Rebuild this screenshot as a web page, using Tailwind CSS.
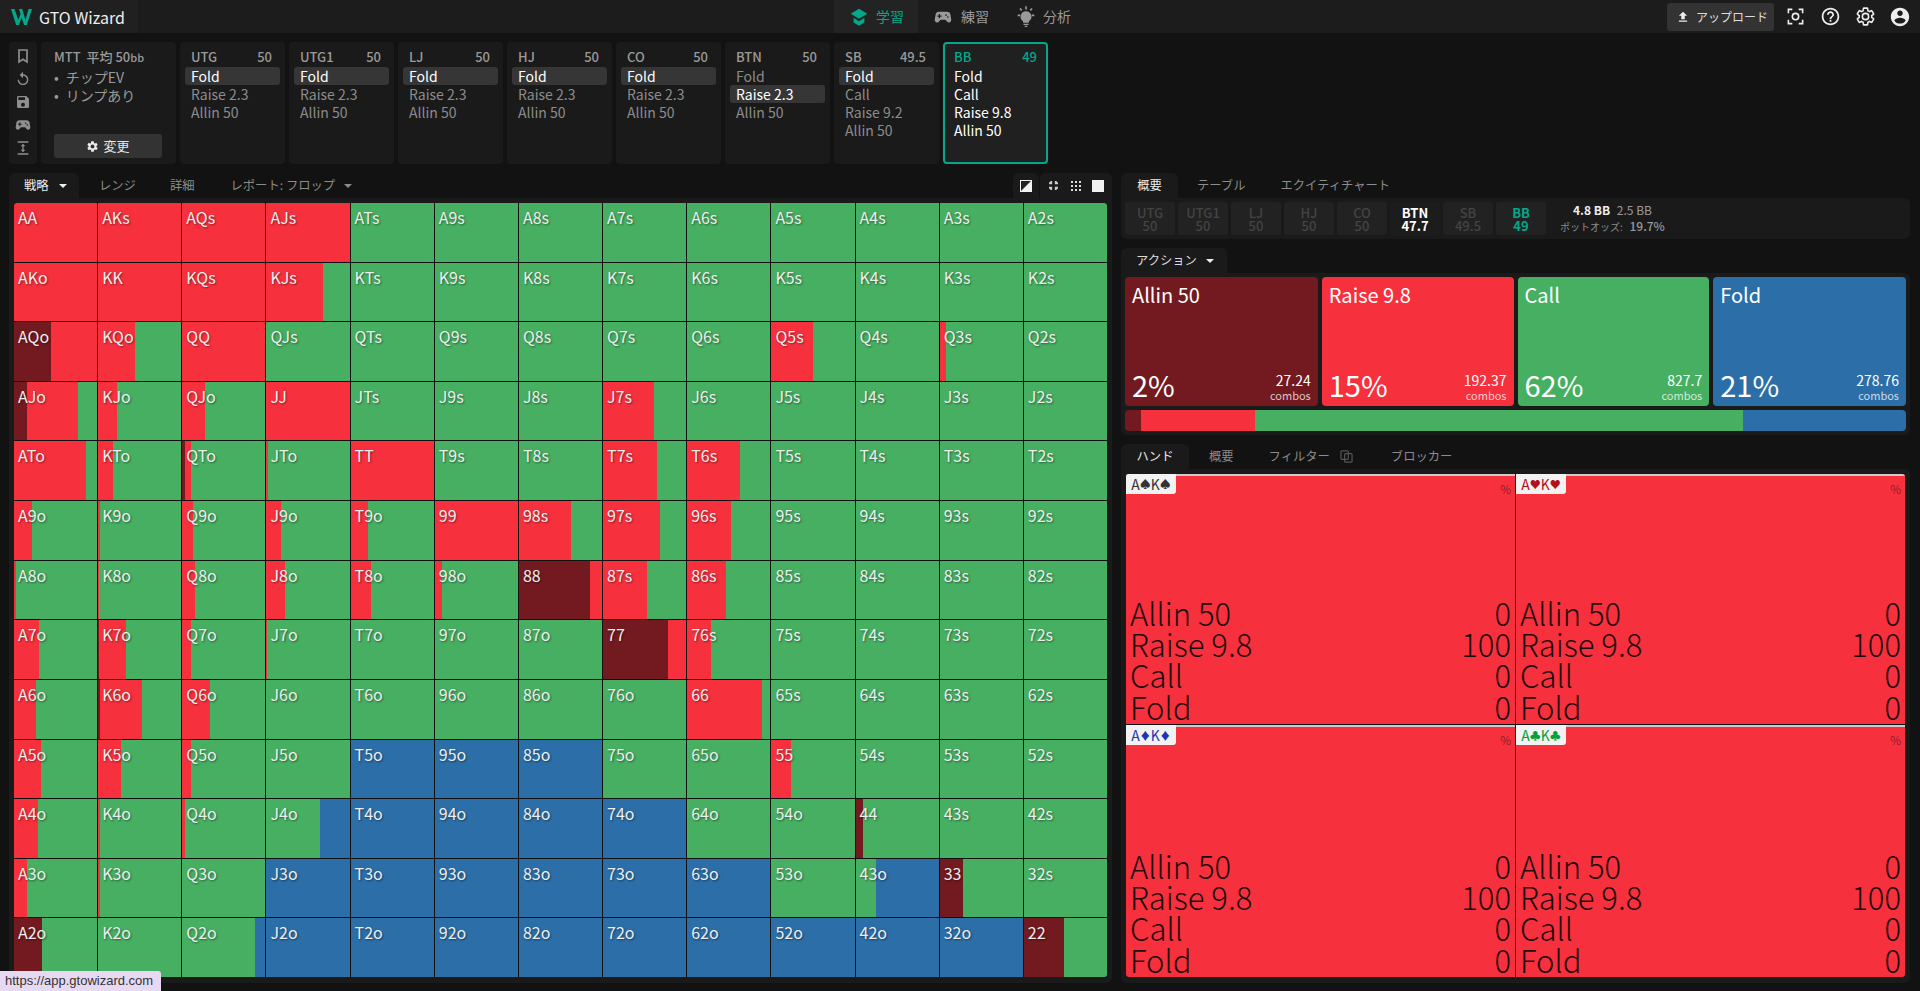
<!DOCTYPE html>
<html lang="ja">
<head>
    <meta charset="UTF-8">
    <title>GTO Wizard</title>
    <script src="https://cdn.jsdelivr.net/npm/@tailwindcss/browser@4"></script>
</head>
<body class="bg-[#121212] text-white font-['Noto_Sans_CJK_JP',sans-serif] w-[1920px] h-[991px] overflow-hidden relative">

    <!-- barra superior -->
    <header class="h-[33px] bg-[#1c1c1c] flex items-stretch relative">
        <div class="w-[138px] bg-[#202020] flex items-center pl-[11px] gap-[7px]">
            <svg class="w-[21px] h-[16px]" viewBox="0 0 21 16" fill="#04a78a"><path d="M0 0h3.500l3.800 11L9.500 5 8 0h3.200l3.300 11L17.500 0H21l-5.200 16h-2.600L10.500 8.500 8 16H5.200z"/></svg>
            <span class="text-[16px] text-[#eeeeee]">GTO Wizard</span>
        </div>
        <nav class="absolute left-[834px] top-0 h-[33px] flex text-[14px]">
            <div class="w-[84px] bg-[#232323] flex items-center pl-[15px] gap-[7px] text-[#04a78a]">
                <svg class="w-[20px] h-[20px]" viewBox="0 0 24 24" fill="#04a78a"><path d="M12 2 2 8l10 6 10-6zM5.500 13v5.500L12 22.500l6.500-4V13L12 17z"/></svg>
                <span>学習</span>
            </div>
            <div class="w-[84px] flex items-center pl-[15px] gap-[8px] text-[#9a9a9a]">
                <svg class="w-[20px] h-[18px]" viewBox="0 0 24 24" fill="#9a9a9a"><path d="M7 5h10a5 5 0 0 1 5 4.200l1 6.300a3.200 3.200 0 0 1-5.600 2.500L15 15.500H9L6.600 18A3.200 3.200 0 0 1 1 15.500l1-6.300A5 5 0 0 1 7 5z"/><path fill="#1c1c1c" d="M6.500 8h1.500v2h2v1.500H8v2H6.500v-2h-2V10h2z"/><circle fill="#1c1c1c" cx="16" cy="9.500" r="1.100"/><circle fill="#1c1c1c" cx="18.500" cy="12" r="1.100"/></svg>
                <span>練習</span>
            </div>
            <div class="flex items-center pl-[14px] gap-[7px] text-[#9a9a9a]">
                <svg class="w-[20px] h-[22px]" viewBox="0 0 24 26" fill="#9a9a9a"><path d="M12 6a6.500 6.500 0 0 0-3.500 12v2h7v-2A6.500 6.500 0 0 0 12 6zM9 21h6v1.500H9zM10.500 23.500h3V25h-3zM11 0h2v4h-2zM2 10h3v2H2zM19 10h3v2h-3zM4 3.500 5.400 2.100l2.200 2.200-1.400 1.400zM18.600 2.100 20 3.500l-2.200 2.200-1.400-1.400z"/></svg>
                <span>分析</span>
            </div>
        </nav>
        <div class="ml-auto flex items-center pr-[9px]">
            <button class="w-[107px] h-[28px] bg-[#333333] rounded-[3px] flex items-center pl-[9px] gap-[6px] text-[12px] text-[#dddddd]">
                <svg class="w-[14px] h-[14px]" viewBox="0 0 24 24" fill="#eeeeee"><path d="M9 16h6v-6h4l-7-7-7 7h4zM5 18h14v2H5z"/></svg>
                <span>アップロード</span>
            </button>
            <svg class="w-[19px] h-[19px] ml-[12px]" viewBox="0 0 24 24" fill="none" stroke="#eeeeee" stroke-width="2"><path d="M8 3H3v5M16 3h5v5M8 21H3v-5M16 21h5v-5"/><circle cx="12" cy="12" r="4"/></svg>
            <svg class="w-[21px] h-[21px] ml-[15px]" viewBox="0 0 24 24" fill="#eeeeee"><path d="M11 18h2v-2h-2v2zm1-16C6.480 2 2 6.480 2 12s4.480 10 10 10 10-4.480 10-10S17.520 2 12 2zm0 18c-4.410 0-8-3.590-8-8s3.590-8 8-8 8 3.590 8 8-3.590 8-8 8zm0-14c-2.210 0-4 1.790-4 4h2c0-1.100.9-2 2-2s2 .9 2 2c0 2-3 1.750-3 5h2c0-2.250 3-2.500 3-5 0-2.210-1.790-4-4-4z"/></svg>
            <svg class="w-[21px] h-[21px] ml-[14px]" viewBox="0 0 24 24" fill="none" stroke="#eeeeee" stroke-width="1.800"><path d="M19.140 12.940c.04-.3.06-.61.06-.94 0-.32-.02-.64-.07-.94l2.030-1.580c.18-.14.23-.41.12-.61l-1.920-3.320c-.12-.22-.37-.29-.59-.22l-2.390.96c-.5-.38-1.030-.7-1.620-.94l-.36-2.540c-.04-.24-.24-.41-.48-.41h-3.840c-.24 0-.43.17-.47.41l-.36 2.540c-.59.24-1.130.57-1.620.94l-2.390-.96c-.22-.08-.47 0-.59.22L2.740 8.870c-.12.21-.08.47.12.61l2.030 1.580c-.05.3-.09.63-.09.94s.02.64.07.94l-2.030 1.580c-.18.14-.23.41-.12.61l1.920 3.320c.12.22.37.29.59.22l2.390-.96c.5.38 1.030.7 1.620.94l.36 2.540c.05.24.24.41.48.41h3.840c.24 0 .44-.17.47-.41l.36-2.540c.59-.24 1.130-.56 1.620-.94l2.390.96c.22.08.47 0 .59-.22l1.920-3.320c.12-.22.07-.47-.12-.61l-2.010-1.580zM12 15.600c-1.980 0-3.600-1.620-3.600-3.600s1.620-3.600 3.600-3.600 3.600 1.620 3.600 3.600-1.620 3.600-3.600 3.600z"/></svg>
            <svg class="w-[22px] h-[22px] ml-[13px]" viewBox="0 0 24 24" fill="#eeeeee"><path d="M12 2C6.480 2 2 6.480 2 12s4.480 10 10 10 10-4.480 10-10S17.520 2 12 2zm0 3c1.660 0 3 1.340 3 3s-1.340 3-3 3-3-1.340-3-3 1.340-3 3-3zm0 14.200c-2.500 0-4.710-1.280-6-3.220.03-1.990 4-3.080 6-3.080 1.990 0 5.970 1.090 6 3.080-1.290 1.940-3.500 3.220-6 3.220z"/></svg>
        </div>
    </header>

    <!-- posiciones -->
    <section class="flex gap-[4px] pl-[9px] mt-[9px] h-[122px]">
        <div class="w-[28px] bg-[#1a1a1a] rounded-[4px] flex flex-col items-center pt-[6px] gap-[7px]">
            <svg class="w-[16px] h-[16px]" viewBox="0 0 24 24" fill="none" stroke="#8f8f8f" stroke-width="2.500"><path d="M6 3h12v18l-6-4-6 4z"/></svg>
            <svg class="w-[16px] h-[16px]" viewBox="0 0 24 24" fill="#8f8f8f"><path d="M12 5V1L7 6l5 5V7c3.310 0 6 2.690 6 6s-2.690 6-6 6-6-2.690-6-6H4c0 4.420 3.580 8 8 8s8-3.580 8-8-3.580-8-8-8z"/></svg>
            <svg class="w-[16px] h-[16px]" viewBox="0 0 24 24" fill="#8f8f8f"><path d="M17 3H5a2 2 0 0 0-2 2v14a2 2 0 0 0 2 2h14a2 2 0 0 0 2-2V7l-4-4zm-5 16a3 3 0 1 1 0-6 3 3 0 0 1 0 6zm3-10H5V5h10v4z"/></svg>
            <svg class="w-[16px] h-[16px]" viewBox="0 0 24 24" fill="#8f8f8f"><path d="M7 5h10a5 5 0 0 1 5 4.200l1 6.300a3.200 3.200 0 0 1-5.600 2.500L15 15.500H9L6.600 18A3.200 3.200 0 0 1 1 15.500l1-6.300A5 5 0 0 1 7 5z"/><path fill="#1a1a1a" d="M6.500 8h1.500v2h2v1.500H8v2H6.500v-2h-2V10h2z"/><circle fill="#1a1a1a" cx="16" cy="9.500" r="1.100"/><circle fill="#1a1a1a" cx="18.500" cy="12" r="1.100"/></svg>
            <svg class="w-[16px] h-[16px]" viewBox="0 0 24 24" fill="#8f8f8f"><path d="M4 2h16v2H4zM4 20h16v2H4zM12 5.500l3.500 4H13v5h2.500L12 18.500l-3.500-4H11v-5H8.500z"/></svg>
        </div>

        <div class="w-[135px] bg-[#1a1a1a] rounded-[4px] pl-[13px] pr-[14px] pt-[6px] flex flex-col text-[#9a9a9a]">
            <div class="text-[13px] leading-[18px] font-medium">MTT&nbsp; 平均 50<span class="text-[11px]">bb</span></div>
            <div class="mt-[2px] text-[14px] leading-[18px] flex gap-[7px]"><span>•</span><span>チップEV</span></div>
            <div class="text-[14px] leading-[18px] flex gap-[7px]"><span>•</span><span>リンプあり</span></div>
            <button class="mt-auto mb-[6px] h-[24px] bg-[#333333] rounded-[3px] flex items-center justify-center gap-[4px] text-[13px] text-[#e5e5e5]">
                <svg class="w-[13px] h-[13px]" viewBox="0 0 24 24" fill="#eeeeee"><path d="M19.140 12.940c.04-.3.06-.61.06-.94 0-.32-.02-.64-.07-.94l2.030-1.580c.18-.14.23-.41.12-.61l-1.920-3.320c-.12-.22-.37-.29-.59-.22l-2.390.96c-.5-.38-1.030-.7-1.620-.94l-.36-2.540c-.04-.24-.24-.41-.48-.41h-3.840c-.24 0-.43.17-.47.41l-.36 2.540c-.59.24-1.130.57-1.620.94l-2.390-.96c-.22-.08-.47 0-.59.22L2.740 8.870c-.12.21-.08.47.12.61l2.030 1.580c-.05.3-.09.63-.09.94s.02.64.07.94l-2.030 1.580c-.18.14-.23.41-.12.61l1.920 3.320c.12.22.37.29.59.22l2.390-.96c.5.38 1.030.7 1.620.94l.36 2.540c.05.24.24.41.48.41h3.840c.24 0 .44-.17.47-.41l.36-2.540c.59-.24 1.130-.56 1.620-.94l2.390.96c.22.08.47 0 .59-.22l1.920-3.320c.12-.22.07-.47-.12-.61l-2.010-1.580zM12 15.600c-1.980 0-3.600-1.620-3.600-3.600s1.620-3.600 3.600-3.600 3.600 1.620 3.600 3.600-1.620 3.600-3.600 3.600z"/></svg>
                <span>変更</span>
            </button>
        </div>

        <div id="positions" class="flex gap-[4px]"></div>
    </section>

    <!-- contenido -->
    <main class="flex pl-[9px] mt-[9px] gap-[9px]">

        <!-- matriz -->
        <section class="w-[1103px]">
            <div class="h-[25px] flex items-center text-[12.3px] text-[#8c8c8c]">
                <div class="w-[70px] h-[25px] bg-[#1a1a1a] rounded-t-[6px] flex items-center pl-[15px] text-[#eeeeee]">戦略<span class="ml-[10px] w-0 h-0 border-x-[4px] border-x-transparent border-t-[4px] border-t-[#eeeeee]"></span></div>
                <span class="ml-[20px]">レンジ</span>
                <span class="ml-[34px]">詳細</span>
                <span class="ml-[36px]">レポート: フロップ</span>
                <span class="ml-[9px] w-0 h-0 border-x-[4px] border-x-transparent border-t-[4px] border-t-[#8c8c8c]"></span>
                <div class="ml-auto flex h-[25px] gap-[1px]">
                    <div class="w-[26px] bg-[#1a1a1a] rounded-t-[6px] flex items-center justify-center">
                        <svg class="w-[12px] h-[12px]" viewBox="0 0 12 12"><rect x="0.500" y="0.500" width="11" height="11" fill="#222222" stroke="#f2f2f2"/><path d="M12 0v12H0z" fill="#f2f2f2"/></svg>
                    </div>
                    <div class="w-[72px] bg-[#1a1a1a] rounded-t-[6px] flex items-center pl-[9px] gap-[13px]">
                        <svg class="w-[9px] h-[9px]" viewBox="0 0 10 10" fill="#cccccc"><path d="M0 3.500h3.500V0H2L0 2zM6.500 0v3.500H10V2L8 0zM0 6.500h3.500V10H2L0 8zM6.500 10V6.500H10V8l-2 2z"/></svg>
                        <svg class="w-[10px] h-[10px]" viewBox="0 0 10 10" fill="#dddddd"><path d="M0 0h2v2H0zM4 0h2v2H4zM8 0h2v2H8zM0 4h2v2H0zM4 4h2v2H4zM8 4h2v2H8zM0 8h2v2H0zM4 8h2v2H4zM8 8h2v2H8z"/></svg>
                        <svg class="w-[12px] h-[12px] -ml-[2px]" viewBox="0 0 12 12"><rect width="12" height="12" fill="#f2f2f2"/></svg>
                    </div>
                </div>
            </div>
            <div class="bg-[#1a1a1a] rounded-b-[6px] pl-[5px] pr-[5px] pt-[5px] pb-[6px]">
                <div id="matrix" class="grid grid-cols-13 grid-rows-13 gap-px h-[774px] bg-[#111111] rounded-[3px] overflow-hidden"></div>
            </div>
        </section>

        <!-- panel derecho -->
        <section class="w-[789px]">
            <div class="h-[25px] flex items-center text-[12.3px] text-[#8c8c8c]">
                <div class="w-[57px] h-[25px] bg-[#1a1a1a] rounded-t-[6px] flex items-center justify-center text-[#eeeeee]">概要</div>
                <span class="ml-[19px]">テーブル</span>
                <span class="ml-[35px]">エクイティチャート</span>
            </div>
            <div class="h-[41px] bg-[#1a1a1a] rounded-[6px] rounded-tl-none flex items-center pl-[4px] gap-[3px]" id="stacks"></div>

            <div class="mt-[9px] w-[106px] h-[25px] bg-[#1a1a1a] rounded-t-[6px] flex items-center pl-[15px] text-[12.3px] text-[#dddddd]">アクション<span class="ml-[9px] w-0 h-0 border-x-[4px] border-x-transparent border-t-[4px] border-t-[#eeeeee]"></span></div>
            <div class="h-[162px] bg-[#1a1a1a] rounded-[6px] rounded-tl-none px-[4px] pt-[4px]">
                <div class="flex gap-[4px] h-[129px]">
                    <div class="w-[193px] bg-[#731a20] rounded-[4px] px-[7px] pt-[4px] flex flex-col">
                        <div class="text-[20px] leading-[28px]">Allin 50</div>
                        <div class="mt-auto mb-[4px] flex justify-between items-end">
                            <span class="text-[29px] leading-[36px]">2%</span>
                            <span class="text-right"><span class="block text-[14px] leading-[17px]">27.24</span><span class="block text-[11px] leading-[13px] text-white/75">combos</span></span>
                        </div>
                    </div>
                    <div class="w-[192px] bg-[#f7303e] rounded-[4px] px-[7px] pt-[4px] flex flex-col">
                        <div class="text-[20px] leading-[28px]">Raise 9.8</div>
                        <div class="mt-auto mb-[4px] flex justify-between items-end">
                            <span class="text-[29px] leading-[36px]">15%</span>
                            <span class="text-right"><span class="block text-[14px] leading-[17px]">192.37</span><span class="block text-[11px] leading-[13px] text-white/75">combos</span></span>
                        </div>
                    </div>
                    <div class="w-[192px] bg-[#46af62] rounded-[4px] px-[7px] pt-[4px] flex flex-col">
                        <div class="text-[20px] leading-[28px]">Call</div>
                        <div class="mt-auto mb-[4px] flex justify-between items-end">
                            <span class="text-[29px] leading-[36px]">62%</span>
                            <span class="text-right"><span class="block text-[14px] leading-[17px]">827.7</span><span class="block text-[11px] leading-[13px] text-white/75">combos</span></span>
                        </div>
                    </div>
                    <div class="w-[193px] bg-[#2b6ea8] rounded-[4px] px-[7px] pt-[4px] flex flex-col">
                        <div class="text-[20px] leading-[28px]">Fold</div>
                        <div class="mt-auto mb-[4px] flex justify-between items-end">
                            <span class="text-[29px] leading-[36px]">21%</span>
                            <span class="text-right"><span class="block text-[14px] leading-[17px]">278.76</span><span class="block text-[11px] leading-[13px] text-white/75">combos</span></span>
                        </div>
                    </div>
                </div>
                <div class="flex h-[21px] mt-[4px] rounded-[4px] overflow-hidden">
                    <div class="w-[16px] bg-[#731a20]"></div>
                    <div class="w-[114px] bg-[#f7303e]"></div>
                    <div class="w-[488px] bg-[#46af62]"></div>
                    <div class="flex-1 bg-[#2b6ea8]"></div>
                </div>
            </div>

            <div class="mt-[9px] h-[25px] flex items-center text-[12.3px] text-[#8c8c8c]">
                <div class="w-[68px] h-[25px] bg-[#1a1a1a] rounded-t-[6px] flex items-center justify-center text-[#eeeeee]">ハンド</div>
                <span class="ml-[20px]">概要</span>
                <span class="ml-[35px]">フィルター</span>
                <svg class="ml-[10px] w-[13px] h-[13px]" viewBox="0 0 14 14" fill="none" stroke="#555555" stroke-width="1.300"><rect x="1" y="1" width="8" height="9" rx="1"/><rect x="5" y="4" width="8" height="9" rx="1"/></svg>
                <span class="ml-[38px]">ブロッカー</span>
            </div>
            <div class="h-[514px] bg-[#1a1a1a] rounded-[6px] rounded-tl-none p-[5px]">
                <div id="hands" class="grid grid-cols-2 grid-rows-[250px_252px] gap-px bg-[#111111] h-[503px] rounded-[3px] overflow-hidden"></div>
            </div>
        </section>
    </main>

    <!-- url del enlace -->
    <div class="absolute left-0 bottom-0 w-[161px] h-[20px] bg-[#e8d9f3] rounded-tr-[3px] flex items-center pl-[5px] font-['Liberation_Sans',sans-serif] text-[13px] text-[#333333]">https://app.gtowizard.com</div>

    <script>
        const positions = [
            { name: 'UTG', stack: '50', rows: ['Fold', 'Raise 2.3', 'Allin 50'], selected: 0 },
            { name: 'UTG1', stack: '50', rows: ['Fold', 'Raise 2.3', 'Allin 50'], selected: 0 },
            { name: 'LJ', stack: '50', rows: ['Fold', 'Raise 2.3', 'Allin 50'], selected: 0 },
            { name: 'HJ', stack: '50', rows: ['Fold', 'Raise 2.3', 'Allin 50'], selected: 0 },
            { name: 'CO', stack: '50', rows: ['Fold', 'Raise 2.3', 'Allin 50'], selected: 0 },
            { name: 'BTN', stack: '50', rows: ['Fold', 'Raise 2.3', 'Allin 50'], selected: 1 },
            { name: 'SB', stack: '49.5', rows: ['Fold', 'Call', 'Raise 9.2', 'Allin 50'], selected: 0 },
            { name: 'BB', stack: '49', rows: ['Fold', 'Call', 'Raise 9.8', 'Allin 50'], selected: -1, active: true }
        ];

        const posBox = document.getElementById('positions');
        positions.forEach(p => {
            const card = document.createElement('div');
            card.className = p.active
                ? 'w-[105px] bg-[#202020] border-2 border-[#04a78a] rounded-[4px] px-[9px] pt-[4px]'
                : 'w-[105px] bg-[#1a1a1a] rounded-[4px] px-[5px] pt-[6px]';
            const head = p.active
                ? 'flex justify-between text-[13px] leading-[18px] font-medium text-[#04a78a] mb-[1px]'
                : 'flex justify-between text-[13px] leading-[18px] font-medium text-[#9a9a9a] pl-[6px] pr-[8px] mb-[1px]';
            let html = `<div class="${head}"><span>${p.name}</span><span>${p.stack}</span></div>`;
            p.rows.forEach((r, i) => {
                if (p.active) {
                    html += `<div class="h-[18px] leading-[18px] text-[14px] text-white">${r}</div>`;
                } else if (i === p.selected) {
                    html += `<div class="h-[18px] leading-[18px] text-[14px] text-white bg-[#363636] rounded-[3px] pl-[6px]">${r}</div>`;
                } else {
                    html += `<div class="h-[18px] leading-[18px] text-[14px] text-[#8c8c8c] pl-[6px]">${r}</div>`;
                }
            });
            card.innerHTML = html;
            posBox.appendChild(card);
        });

        const stacks = [['UTG', '50'], ['UTG1', '50'], ['LJ', '50'], ['HJ', '50'], ['CO', '50'], ['BTN', '47.7', 'on'], ['SB', '49.5'], ['BB', '49', 'hero']];
        const stackBox = document.getElementById('stacks');
        stacks.forEach(s => {
            const chip = document.createElement('div');
            let cls = 'w-[50px] h-[33px] rounded-[3px] bg-[#222222] text-[#444444] flex flex-col items-center justify-center text-[13px] leading-[13px] font-medium';
            if (s[2] === 'on') cls = 'w-[50px] h-[33px] rounded-[3px] bg-[#1c1c1c] text-white flex flex-col items-center justify-center text-[13px] leading-[13px] font-bold';
            if (s[2] === 'hero') cls = 'w-[50px] h-[33px] rounded-[3px] bg-[#222222] text-[#04a78a] flex flex-col items-center justify-center text-[13px] leading-[13px] font-bold';
            chip.className = cls;
            chip.innerHTML = `<span>${s[0]}</span><span>${s[1]}</span>`;
            stackBox.appendChild(chip);
        });
        const pot = document.createElement('div');
        pot.className = 'ml-[11px] flex flex-col items-center text-[12px] leading-[16px]';
        pot.innerHTML = `<div class="font-bold text-[#eeeeee]">4.8 BB <span class="ml-[4px] font-normal text-[#9a9a9a]">2.5 BB</span></div>
            <div class="text-[#9a9a9a]"><span class="text-[10px] text-[#8c8c8c]">ポットオッズ:</span> <span class="ml-[4px] font-medium">19.7%</span></div>`;
        stackBox.appendChild(pot);

        // [allin, raise, call] en %, el resto es fold
        const ranks = ['A', 'K', 'Q', 'J', 'T', '9', '8', '7', '6', '5', '4', '3', '2'];
        const mixes = {
            AA: [0, 100, 0], AKs: [0, 100, 0], AQs: [0, 100, 0], AJs: [0, 100, 0],
            AKo: [0, 100, 0], KK: [0, 100, 0], KQs: [0, 100, 0], KJs: [0, 68, 32],
            AQo: [45, 55, 0], KQo: [0, 44, 56], QQ: [0, 100, 0], Q5s: [0, 50, 50], Q3s: [0, 7, 93],
            AJo: [16, 61, 23], KJo: [0, 23, 77], QJo: [0, 27, 73], JJ: [0, 100, 0], J7s: [0, 61, 39],
            ATo: [0, 87, 13], KTo: [0, 18, 82], QTo: [3, 7, 90], JTo: [0, 2, 98], TT: [0, 100, 0], T7s: [0, 65, 35], T6s: [0, 63, 37],
            A9o: [0, 22, 78], K9o: [0, 2, 98], Q9o: [0, 13, 87], J9o: [0, 18, 82], T9o: [0, 21, 79], 99: [0, 100, 0], '98s': [0, 63, 37], '97s': [0, 68, 32], '96s': [0, 53, 47],
            A8o: [0, 2.5, 97.5], K8o: [0, 1.5, 98.5], Q8o: [0, 15, 85], J8o: [0, 22, 78], T8o: [0, 24, 76], '98o': [0, 8.5, 91.5], 88: [86, 14, 0], '87s': [0, 53, 47], '86s': [0, 47, 53],
            A7o: [0, 30, 70], K7o: [1, 32, 67], Q7o: [0, 10, 90], J7o: [0, 1, 99], T7o: [0, 1, 99], 77: [78, 22, 0], '76s': [0, 28, 72],
            A6o: [0, 26, 74], K6o: [2, 51, 47], Q6o: [0, 33, 67], 66: [0, 90, 10],
            A5o: [0, 32, 68], K5o: [0, 27, 73], Q5o: [0, 10, 90], 55: [0, 24, 76],
            A4o: [0, 29, 71], K4o: [0, 2, 98], Q4o: [0, 3, 97], J4o: [0, 0, 64], 44: [9, 0, 91],
            A3o: [0, 16, 84], K3o: [0, 2, 98], '43o': [0, 0, 25], 33: [28, 0, 72],
            A2o: [34, 0, 66], Q2o: [0, 0, 87], 22: [48, 0, 52]
        };
        const foldHands = ['T5o', '95o', '85o', 'T4o', '94o', '84o', '74o', 'J3o', 'T3o', '93o', '83o', '73o', '63o', 'J2o', 'T2o', '92o', '82o', '72o', '62o', '52o', '42o', '32o'];

        const matrix = document.getElementById('matrix');
        ranks.forEach((r1, i) => {
            ranks.forEach((r2, j) => {
                const label = i === j ? r1 + r2 : i < j ? r1 + r2 + 's' : r2 + r1 + 'o';
                const mix = foldHands.includes(label) ? [0, 0, 0] : (mixes[label] || [0, 0, 100]);
                const cell = document.createElement('div');
                cell.className = 'relative flex overflow-hidden bg-[#2b6ea8]';
                cell.innerHTML = `<div class="bg-[#731a20]" style="width:${mix[0]}%"></div><div class="bg-[#f7303e]" style="width:${mix[1]}%"></div><div class="bg-[#46af62]" style="width:${mix[2]}%"></div>
                    <span class="absolute left-[4px] top-[3px] text-[16px] leading-[22px] text-[#eeeeee] [text-shadow:1px_1px_2px_rgba(0,0,0,0.45)]">${label}</span>`;
                matrix.appendChild(cell);
            });
        });

        const hands = [
            ['♠', 'text-[#333333]'],
            ['♥', 'text-[#b30f1e]'],
            ['♦', 'text-[#1c35b5]'],
            ['♣', 'text-[#00a03c]']
        ];
        const handBox = document.getElementById('hands');
        hands.forEach(h => {
            const cell = document.createElement('div');
            cell.className = 'relative bg-[#f7303e] border-t-2 border-[#cccccc] flex flex-col justify-end px-[4px] pb-[2px] text-[#1c0a0c] font-light text-[31px] leading-[31.3px]';
            cell.innerHTML = `<div class="absolute left-0 top-[-2px] w-[50px] h-[20px] bg-[#f2f2f2] rounded-br-[3px] flex items-center justify-center text-[14px] leading-[20px] font-normal ${h[1]}">A<span class="text-[11px]">${h[0]}</span>K<span class="text-[11px]">${h[0]}</span></div>
                <span class="absolute right-[4px] top-[6px] text-[12px] leading-[14px] text-[#6b1a20]">%</span>
                <div class="flex justify-between"><span>Allin 50</span><span>0</span></div>
                <div class="flex justify-between"><span>Raise 9.8</span><span>100</span></div>
                <div class="flex justify-between"><span>Call</span><span>0</span></div>
                <div class="flex justify-between"><span>Fold</span><span>0</span></div>`;
            handBox.appendChild(cell);
        });
    </script>
</body>
</html>
